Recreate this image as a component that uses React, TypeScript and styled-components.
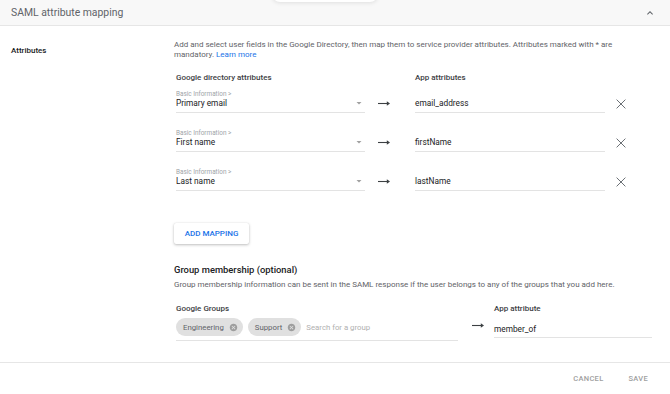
import React from 'react';
import styled, { createGlobalStyle } from 'styled-components';

const GlobalStyle = createGlobalStyle`
  html, body {
    margin: 0;
    padding: 0;
    background: #ffffff;
  }
  body {
    font-family: Roboto, 'Liberation Sans', Arial, sans-serif;
    -webkit-font-smoothing: antialiased;
  }
`;

const Page = styled.div`
  position: relative;
  width: 670px;
  height: 394px;
  display: flex;
  flex-direction: column;
  background: #fff;
  overflow: hidden;
`;

const TabShadow = styled.div`
  position: absolute;
  top: -6px;
  left: 272px;
  width: 106px;
  height: 8px;
  border-radius: 0 0 8px 8px;
  background: #fff;
  box-shadow: 0 1px 4px rgba(0, 0, 0, 0.1);
`;

const Header = styled.div`
  height: 25px;
  flex: none;
  display: flex;
  align-items: center;
  justify-content: space-between;
  padding: 0 14px 0 11px;
  background: #f8f8f8;
  border-bottom: 1px solid #e6e6e6;
`;

const HeaderTitle = styled.div`
  font-size: 10.4px;
  color: #5f6368;
`;

const Body = styled.div`
  flex: 1;
  display: flex;
`;

const SideLabel = styled.div`
  width: 163px;
  padding: 20px 0 0 11px;
  font-size: 8px;
  font-weight: 500;
  color: #202124;
`;

const Main = styled.div`
  flex: 1;
  display: flex;
  flex-direction: column;
  padding-top: 14px;
`;

const Description = styled.p`
  margin: 0;
  width: 460px;
  font-size: 8px;
  line-height: 10px;
  color: #5f6368;
`;

const Link = styled.a`
  color: #1a73e8;
  text-decoration: none;
`;

const MappingGrid = styled.div`
  display: grid;
  grid-template-columns: 189px 50px 190px 32px;
  margin: 13px 0 0 2px;
`;

const ColumnHead = styled.div<{ $gap?: number }>`
  font-size: 8px;
  line-height: 10px;
  font-weight: 500;
  color: #3c4043;
  margin-bottom: ${p => p.$gap ?? 7}px;
`;

const Field = styled.div<{ $last?: boolean }>`
  display: flex;
  align-items: flex-end;
  justify-content: space-between;
  height: 22px;
  border-bottom: 1px solid #e3e3e3;
  margin-bottom: ${p => (p.$last ? 0 : 16)}px;
`;

const FieldText = styled.div`
  display: flex;
  flex-direction: column;
  padding-bottom: 4px;
`;

const Overline = styled.span`
  font-size: 6.4px;
  line-height: 8px;
  color: #a0a4a8;
`;

const Value = styled.span`
  font-size: 8.3px;
  line-height: 10px;
  color: #202124;
`;

const Cell = styled.div<{ $last?: boolean }>`
  display: flex;
  align-items: center;
  height: 23px;
  padding-top: 4px;
  box-sizing: border-box;
  margin-bottom: ${p => (p.$last ? 0 : 16)}px;
`;

const ArrowCell = styled(Cell)`
  padding-left: 13px;
`;

const IconCell = styled(Cell)`
  justify-content: center;
`;

const Caret = styled.svg`
  width: 12px;
  height: 12px;
  fill: #a0a0a0;
  margin: 0 0 3px 0;
`;

const ArrowIcon = styled.svg`
  width: 12px;
  height: 7px;
  display: block;
`;

const CloseIcon = styled.svg`
  width: 10px;
  height: 10px;
  display: block;
`;

const AddButton = styled.button`
  align-self: flex-start;
  margin-top: 32px;
  width: 75px;
  height: 21px;
  border: none;
  border-radius: 2px;
  background: #fff;
  box-shadow: 0 1px 3px rgba(0, 0, 0, 0.25), 0 0 1px rgba(0, 0, 0, 0.12);
  font-family: inherit;
  font-size: 8px;
  font-weight: 500;
  color: #1a73e8;
  padding: 0;
`;

const SectionTitle = styled.div`
  margin-top: 20px;
  font-size: 9.4px;
  line-height: 12px;
  font-weight: 500;
  color: #202124;
`;

const SectionText = styled.div`
  margin-top: 4px;
  font-size: 8px;
  line-height: 10px;
  color: #5f6368;
`;

const GroupRow = styled.div`
  display: grid;
  grid-template-columns: 282px 36px 158px;
  margin: 14px 0 0 2px;
`;

const GroupCol = styled.div`
  display: flex;
  flex-direction: column;
`;

const ChipBox = styled.div`
  display: flex;
  align-items: center;
  gap: 5px;
  padding: 4px 0;
  border-bottom: 1px solid #e3e3e3;
`;

const Chip = styled.div`
  display: flex;
  align-items: center;
  gap: 5px;
  height: 18px;
  padding: 0 5px 0 7px;
  border-radius: 9px;
  background: #e0e0e0;
  font-size: 7.8px;
  color: #5f6368;
`;

const ChipClose = styled.svg`
  width: 9px;
  height: 9px;
  fill: #9e9e9e;
`;

const Placeholder = styled.span`
  font-size: 7.8px;
  color: #b0b0b0;
`;

const GroupArrow = styled.div`
  display: flex;
  align-items: flex-end;
  padding: 0 0 12px 14px;
`;

const AppInput = styled.div`
  height: 24px;
  display: flex;
  align-items: flex-end;
  padding-bottom: 3px;
  box-sizing: border-box;
  border-bottom: 1px solid #e3e3e3;
`;

const Footer = styled.div`
  height: 31px;
  flex: none;
  display: flex;
  align-items: center;
  justify-content: flex-end;
  gap: 25px;
  padding-right: 22px;
  border-top: 1px solid #e6e6e6;
`;

const FooterButton = styled.span`
  font-size: 7.5px;
  font-weight: 500;
  color: #a0a0a0;
  letter-spacing: 0.3px;
`;

const Arrow = () => (
  <ArrowIcon viewBox="0 0 12 7">
    <line x1="0" y1="3.5" x2="9.5" y2="3.5" stroke="#3c4043" strokeWidth="1.1" />
    <path d="M8.8 1.2L12 3.5 8.8 5.8z" fill="#3c4043" />
  </ArrowIcon>
);

const Close = () => (
  <CloseIcon viewBox="0 0 10 10">
    <path d="M0.6 0.6L9.4 9.4M9.4 0.6L0.6 9.4" stroke="#6b7075" strokeWidth="1" />
  </CloseIcon>
);

const rows = [
  { label: 'Primary email', app: 'email_address' },
  { label: 'First name', app: 'firstName' },
  { label: 'Last name', app: 'lastName' },
];

const App: React.FC = () => {
  return (
    <Page>
      <GlobalStyle />
      <TabShadow />
      <Header>
        <HeaderTitle>SAML attribute mapping</HeaderTitle>
        <svg width="12" height="12" viewBox="0 0 24 24" fill="#5f6368">
          <path d="M12 8l-6 6 1.41 1.41L12 10.83l4.59 4.58L18 14z" />
        </svg>
      </Header>
      <Body>
        <SideLabel>Attributes</SideLabel>
        <Main>
          <Description>
            Add and select user fields in the Google Directory, then map them to service provider
            attributes. Attributes marked with * are
            <br />
            mandatory. <Link href="#">Learn more</Link>
          </Description>
          <MappingGrid>
            <ColumnHead>Google directory attributes</ColumnHead>
            <div />
            <ColumnHead>App attributes</ColumnHead>
            <div />
            {rows.map((r, i) => {
              const last = i === rows.length - 1;
              return (
                <React.Fragment key={r.app}>
                  <Field $last={last}>
                    <FieldText>
                      <Overline>Basic Information &gt;</Overline>
                      <Value>{r.label}</Value>
                    </FieldText>
                    <Caret viewBox="0 0 24 24">
                      <path d="M7 10l5 5 5-5z" />
                    </Caret>
                  </Field>
                  <ArrowCell $last={last}>
                    <Arrow />
                  </ArrowCell>
                  <Field $last={last}>
                    <FieldText>
                      <Value>{r.app}</Value>
                    </FieldText>
                  </Field>
                  <IconCell $last={last}>
                    <Close />
                  </IconCell>
                </React.Fragment>
              );
            })}
          </MappingGrid>
          <AddButton>ADD MAPPING</AddButton>
          <SectionTitle>Group membership (optional)</SectionTitle>
          <SectionText>
            Group membership information can be sent in the SAML response if the user belongs to any
            of the groups that you add here.
          </SectionText>
          <GroupRow>
            <GroupCol>
              <ColumnHead $gap={0}>Google Groups</ColumnHead>
              <ChipBox>
                {['Engineering', 'Support'].map(g => (
                  <Chip key={g}>
                    {g}
                    <ChipClose viewBox="0 0 24 24">
                      <path d="M12 2C6.47 2 2 6.47 2 12s4.47 10 10 10 10-4.47 10-10S17.53 2 12 2zm5 13.59L15.59 17 12 13.41 8.41 17 7 15.59 10.59 12 7 8.41 8.41 7 12 10.59 15.59 7 17 8.41 13.41 12 17 15.59z" />
                    </ChipClose>
                  </Chip>
                ))}
                <Placeholder>Search for a group</Placeholder>
              </ChipBox>
            </GroupCol>
            <GroupArrow>
              <Arrow />
            </GroupArrow>
            <GroupCol>
              <ColumnHead $gap={0}>App attribute</ColumnHead>
              <AppInput>
                <Value>member_of</Value>
              </AppInput>
            </GroupCol>
          </GroupRow>
        </Main>
      </Body>
      <Footer>
        <FooterButton>CANCEL</FooterButton>
        <FooterButton>SAVE</FooterButton>
      </Footer>
    </Page>
  );
};

export default App;
